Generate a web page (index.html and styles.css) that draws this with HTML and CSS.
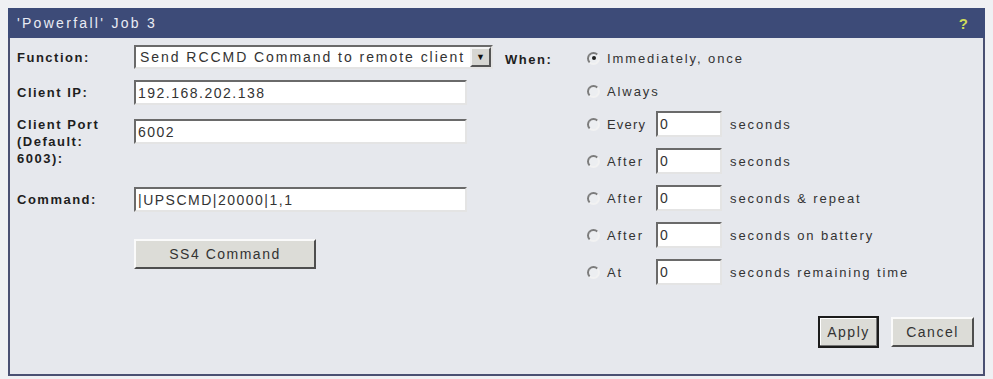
FILE: index.html
```html
<!DOCTYPE html>
<html lang="en">
<head>
    <meta charset="UTF-8">
    <title>'Powerfall' Job 3</title>
    <link rel="stylesheet" href="styles.css">
</head>
<body>
    <div class="panel">
        <div class="panel-head">
            <span class="title">'Powerfall' Job 3</span>
            <span class="help">?</span>
        </div>

        <div class="panel-body">
            <div class="left">
                <div class="row row-function">
                    <label>Function:</label>
                    <div class="select">
                        <span class="select-text">Send RCCMD Command to remote client</span>
                        <span class="select-btn">&#9660;</span>
                    </div>
                </div>
                <div class="row row-ip">
                    <label>Client IP:</label>
                    <div class="input wide">192.168.202.138</div>
                </div>
                <div class="row row-port">
                    <label>Client Port<br>(Default:<br>6003):</label>
                    <div class="input wide">6002</div>
                </div>
                <div class="row row-command">
                    <label>Command:</label>
                    <div class="input wide">|UPSCMD|20000|1,1</div>
                </div>
                <button class="btn ss4-btn">SS4 Command</button>
            </div>

            <div class="right">
                <label class="when">When:</label>
                <div class="options">
                    <div class="opt short">
                        <span class="radio checked"></span>
                        <span>Immediately, once</span>
                    </div>
                    <div class="opt short">
                        <span class="radio"></span>
                        <span>Always</span>
                    </div>
                    <div class="opt">
                        <span class="radio"></span>
                        <span class="opt-text">Every</span>
                        <div class="input small">0</div>
                        <span class="unit">seconds</span>
                    </div>
                    <div class="opt">
                        <span class="radio"></span>
                        <span class="opt-text">After</span>
                        <div class="input small">0</div>
                        <span class="unit">seconds</span>
                    </div>
                    <div class="opt">
                        <span class="radio"></span>
                        <span class="opt-text">After</span>
                        <div class="input small">0</div>
                        <span class="unit">seconds &amp; repeat</span>
                    </div>
                    <div class="opt">
                        <span class="radio"></span>
                        <span class="opt-text">After</span>
                        <div class="input small">0</div>
                        <span class="unit">seconds on battery</span>
                    </div>
                    <div class="opt">
                        <span class="radio"></span>
                        <span class="opt-text">At</span>
                        <div class="input small">0</div>
                        <span class="unit">seconds remaining time</span>
                    </div>
                </div>
            </div>
        </div>

        <div class="actions">
            <button class="btn apply-btn">Apply</button>
            <button class="btn cancel-btn">Cancel</button>
        </div>
    </div>
</body>
</html>
```

FILE: styles.css
```css
* {
    box-sizing: border-box;
    margin: 0;
    padding: 0;
}

body {
    font-family: "Liberation Sans", Arial, sans-serif;
    background-color: #eff0f3;
    color: #222;
    margin: 8px 8px 0 8px;
}

.panel {
    border: 2px solid #4a5072;
    border-top: none;
    background-color: #e6e8ed;
}

.panel-head {
    background-color: #3d4b78;
    height: 30px;
    display: flex;
    align-items: center;
    justify-content: space-between;
    padding: 0 17px 0 7px;
    margin: 0 -2px;
}

.title {
    color: #e9ecf4;
    font-size: 14px;
    letter-spacing: 2.3px;
    padding-left: 2px;
}

.help {
    color: #cfdc5a;
    font-size: 15px;
    font-weight: bold;
}

.panel-body {
    display: flex;
    padding-left: 7px;
}

.left {
    width: 488px;
    display: flex;
    flex-direction: column;
}

label {
    font-weight: bold;
    font-size: 13px;
    letter-spacing: 1.5px;
    line-height: 17px;
    color: #1e1e1e;
}

.row {
    display: flex;
    align-items: center;
}

.row label {
    width: 117px;
    flex-shrink: 0;
}

.row-function {
    margin-top: 7px;
}

.row-ip {
    margin-top: 11px;
}

.row-port {
    margin-top: 11px;
    align-items: flex-start;
}

.row-port .input {
    margin-top: 3px;
}

.row-command {
    margin-top: 20px;
}

.input {
    background-color: #fff;
    border: 2px solid;
    border-color: #6a6a6a #e4e4e4 #e4e4e4 #6a6a6a;
    font-size: 14px;
    letter-spacing: 1.5px;
    padding-left: 2px;
    display: flex;
    align-items: center;
    color: #333;
}

.input.wide {
    width: 333px;
    height: 25px;
}

.input.small {
    width: 66px;
    height: 26px;
    flex-shrink: 0;
}

.select {
    width: 359px;
    height: 24px;
    background-color: #fff;
    border: 2px solid;
    border-color: #6a6a6a #e4e4e4 #e4e4e4 #6a6a6a;
    display: flex;
    align-items: center;
    justify-content: space-between;
}

.select-text {
    font-size: 14px;
    letter-spacing: 1.95px;
    padding-left: 4px;
    color: #333;
    white-space: nowrap;
}

.select-btn {
    width: 21px;
    height: 20px;
    background-color: #d6d6d2;
    border: 2px solid;
    border-color: #f4f4f4 #555 #555 #f4f4f4;
    font-size: 9px;
    display: flex;
    align-items: center;
    justify-content: center;
    color: #111;
}

.btn {
    font-family: "Liberation Sans", Arial, sans-serif;
    font-size: 14px;
    letter-spacing: 1.5px;
    color: #333;
    background-color: #dcdcd7;
    border: 2px solid;
    border-color: #fafafa #4e4e4e #4e4e4e #fafafa;
}

.ss4-btn {
    margin: 27px 0 0 117px;
    width: 182px;
    height: 30px;
}

.right {
    display: flex;
}

.when {
    width: 82px;
    margin-top: 13px;
}

.options {
    display: flex;
    flex-direction: column;
    padding-top: 7px;
}

.opt {
    display: flex;
    align-items: center;
    height: 26px;
    margin-bottom: 11px;
    font-size: 13px;
    letter-spacing: 1.9px;
    color: #333;
}

.opt.short {
    margin-bottom: 7px;
}

.opt:last-child {
    margin-bottom: 0;
}

.opt:nth-child(3) .opt-text {
    letter-spacing: 1.2px;
}

.radio {
    width: 13px;
    height: 13px;
    border-radius: 50%;
    border: 2px solid;
    border-color: #7c7c7c #f2f2f2 #f2f2f2 #7c7c7c;
    background-color: #eceef1;
    margin-right: 7px;
    display: flex;
    align-items: center;
    justify-content: center;
    flex-shrink: 0;
}

.radio.checked::after {
    content: "";
    width: 4px;
    height: 4px;
    border-radius: 50%;
    background-color: #222;
}

.opt-text {
    width: 49px;
    flex-shrink: 0;
}

.unit {
    margin-left: 8px;
    white-space: nowrap;
}

.actions {
    display: flex;
    justify-content: flex-end;
    gap: 12px;
    margin-top: 31px;
    padding: 0 9px 26px 0;
}

.apply-btn {
    width: 61px;
    height: 32px;
    border: 2px solid #1c1c1c;
    box-shadow: inset -1px -1px #777, inset 1px 1px #fff;
}

.cancel-btn {
    width: 83px;
    height: 30px;
    margin-top: 1px;
}
```
